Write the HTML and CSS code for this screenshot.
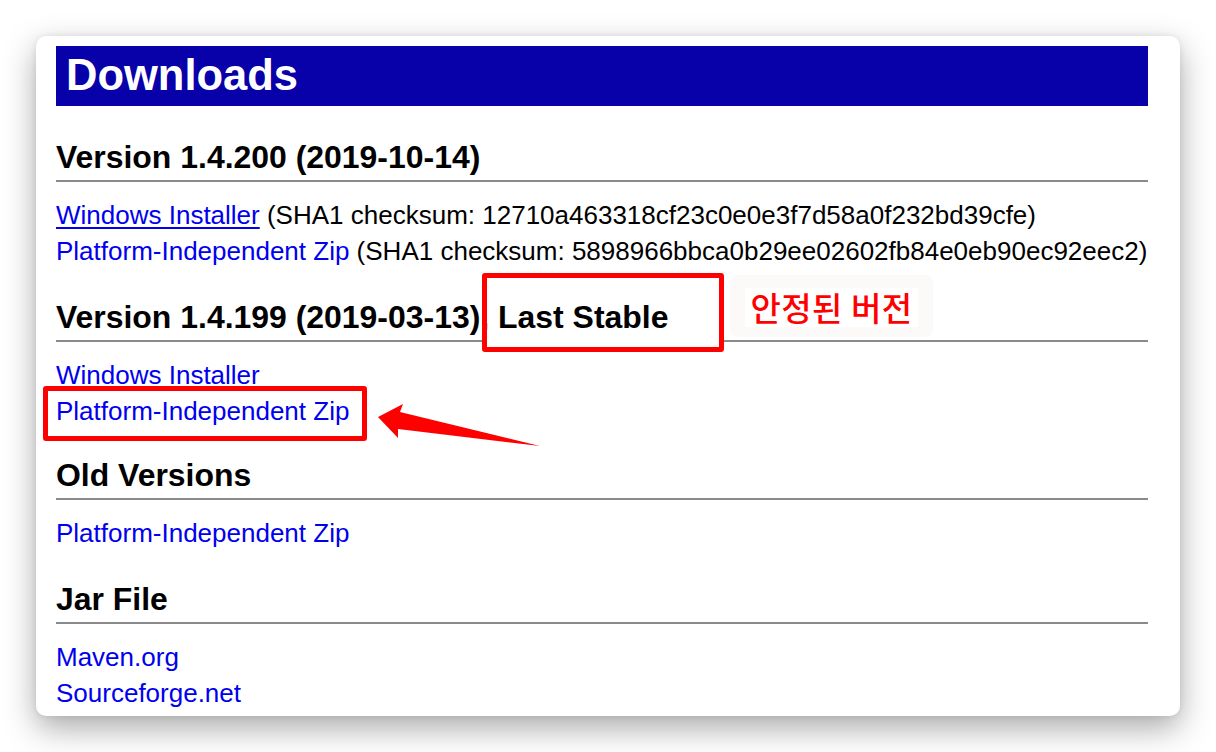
FILE: index.html
```html
<!DOCTYPE html>
<html lang="en">
<head>
<meta charset="utf-8">
<title>Downloads</title>
<link rel="stylesheet" href="styles.css">
</head>
<body>
<div class="card">
  <h1 class="title">Downloads</h1>

  <section class="sec first">
    <h2>Version 1.4.200 (2019-10-14)</h2>
    <p class="links">
      <a href="#" class="hover">Windows Installer</a> (SHA1 checksum: 12710a463318cf23c0e0e3f7d58a0f232bd39cfe)<br>
      <a href="#">Platform-Independent Zip</a> (SHA1 checksum: 5898966bbca0b29ee02602fb84e0eb90ec92eec2)
    </p>
  </section>

  <section class="sec">
    <h2>Version 1.4.199 (2019-03-13), Last Stable</h2>
    <p class="links">
      <a href="#">Windows Installer</a><br>
      <a href="#">Platform-Independent Zip</a>
    </p>
  </section>

  <section class="sec old">
    <h2>Old Versions</h2>
    <p class="links">
      <a href="#">Platform-Independent Zip</a>
    </p>
  </section>

  <section class="sec">
    <h2>Jar File</h2>
    <p class="links">
      <a href="#">Maven.org</a><br>
      <a href="#">Sourceforge.net</a>
    </p>
  </section>

  <div class="mark mark-stable"></div>
  <div class="mark mark-zip"></div>
  <div class="note"><span class="note-text">안정된 버전</span></div>
  <svg class="arrow" width="200" height="60" viewBox="0 0 200 60">
    <polygon points="6,22 31,9 28,17 168,51 26,34 26,43" fill="#ff0000"/>
  </svg>
</div>
</body>
</html>
```

FILE: styles.css
```css
html, body {
  margin: 0;
  padding: 0;
  background: #ffffff;
}

body {
  width: 1216px;
  height: 752px;
  overflow: hidden;
  font-family: "Liberation Sans", Arial, sans-serif;
  color: #000000;
}

.card {
  position: relative;
  margin: 36px 0 0 36px;
  width: 1144px;
  height: 680px;
  box-sizing: border-box;
  padding: 10px 32px 0 20px;
  background: #ffffff;
  border-radius: 10px;
  box-shadow: 0 12px 32px rgba(0, 0, 0, 0.34), 0 0 6px rgba(0, 0, 0, 0.08);
  overflow: hidden;
}

.title {
  margin: 0;
  height: 60px;
  padding: 0 10px;
  background: #0800a8;
  color: #ffffff;
  font-size: 43.5px;
  font-weight: bold;
  line-height: 58px;
}

.sec h2 {
  margin: 30px 0 0;
  padding-bottom: 5px;
  border-bottom: 2px solid #8a8a8a;
  font-size: 31.95px;
  font-weight: bold;
  line-height: 36px;
}

.sec.first h2 {
  margin-top: 33px;
}

.sec.old h2 {
  margin-top: 28px;
}

.links {
  margin: 15px 0 0;
  font-size: 26px;
  line-height: 36px;
  white-space: nowrap;
}

.links a {
  color: #0000ee;
  text-decoration: none;
}

.links a.hover {
  text-decoration: underline;
  text-decoration-thickness: 2px;
  text-underline-offset: 3px;
}

.mark {
  position: absolute;
  box-sizing: border-box;
  border: 5px solid #ff0000;
  border-radius: 3px;
}

.mark-stable {
  left: 446px;
  top: 237px;
  width: 242px;
  height: 79px;
  background: linear-gradient(to bottom, transparent 0, transparent 88%, #ffffff 88%);
}

.mark-zip {
  left: 7px;
  top: 350px;
  width: 324px;
  height: 55px;
}

.note {
  position: absolute;
  left: 694px;
  top: 239px;
  width: 203px;
  height: 62px;
  box-sizing: border-box;
  padding: 13px 15px 10px;
  background: #fbfaf9;
  border-radius: 8px;
}

.note-text {
  display: block;
  height: 39px;
  background: #ffffff;
  color: #ff0000;
  font-family: "Noto Sans CJK KR", sans-serif;
  font-size: 33px;
  font-weight: 500;
  letter-spacing: 0.5px;
  line-height: 38px;
  text-align: center;
  white-space: nowrap;
}

.arrow {
  position: absolute;
  left: 336px;
  top: 359px;
}
```
